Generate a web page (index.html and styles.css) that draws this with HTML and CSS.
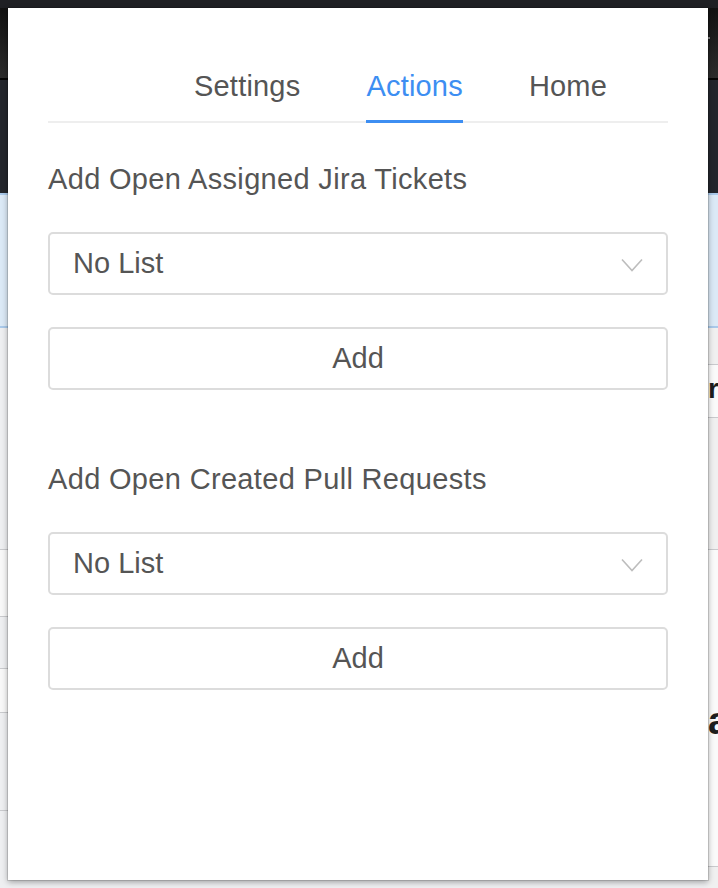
FILE: index.html
```html
<!DOCTYPE html>
<html>
<head>
<meta charset="utf-8">
<link rel="stylesheet" href="styles.css">
</head>
<body>
<div class="desktop">
  <div class="bg-topbar"></div>
  <div class="bg-toolbar"><span class="bg-dot"></span></div>
  <div class="bg-slate"></div>
  <div class="bg-blue"></div>
  <div class="bg-list">
    <div class="bg-col left">
      <div class="bg-row l1"></div>
      <div class="bg-row l2"></div>
      <div class="bg-row l3"></div>
      <div class="bg-row l4"></div>
      <div class="bg-row l5"></div>
      <div class="bg-row l6"></div>
    </div>
    <div class="bg-mid"></div>
    <div class="bg-col right">
      <div class="bg-row q1"></div>
      <div class="bg-row q2"><span class="bg-letter small">r</span></div>
      <div class="bg-row q3"></div>
      <div class="bg-row q4"><span class="bg-letter big">a</span></div>
      <div class="bg-row q5"></div>
    </div>
  </div>

  <div class="popup">
    <nav class="tabs">
      <span class="tab">Settings</span>
      <span class="tab active">Actions</span>
      <span class="tab">Home</span>
    </nav>

    <section class="section first">
      <h2 class="heading">Add Open Assigned Jira Tickets</h2>
      <div class="select">
        <span>No List</span>
        <svg class="chevron" width="22" height="14" viewBox="0 0 22 14"><path d="M1 1.5 L11 12.5 L21 1.5" fill="none" stroke="#bdbdbd" stroke-width="1.6"/></svg>
      </div>
      <button class="btn">Add</button>
    </section>

    <section class="section second">
      <h2 class="heading">Add Open Created Pull Requests</h2>
      <div class="select">
        <span>No List</span>
        <svg class="chevron" width="22" height="14" viewBox="0 0 22 14"><path d="M1 1.5 L11 12.5 L21 1.5" fill="none" stroke="#bdbdbd" stroke-width="1.6"/></svg>
      </div>
      <button class="btn">Add</button>
    </section>
  </div>
</div>
</body>
</html>
```
FILE: styles.css
```css
* { box-sizing: border-box; }
html, body { margin: 0; padding: 0; }
body {
  width: 718px;
  height: 888px;
  overflow: hidden;
  font-family: "Liberation Sans", Arial, sans-serif;
}
.desktop {
  position: relative;
  width: 718px;
  height: 888px;
  background: #eeeff1;
  display: flex;
  flex-direction: column;
}
.bg-topbar {
  height: 8px;
  background: #1f2024;
}
.bg-toolbar {
  height: 72px;
  background: linear-gradient(#121212, #2c2c2c);
  border-bottom: 2px solid #050505;
  display: flex;
  justify-content: flex-end;
  padding-top: 29px;
}
.bg-dot {
  width: 3px;
  height: 2px;
  background: #888;
  margin-right: 8px;
}
.bg-slate {
  height: 113px;
  background: #23262c;
}
.bg-blue {
  height: 135px;
  background: #dbe9f6;
  border-top: 2px solid #a9c9ea;
  border-bottom: 2px solid #a9c9ea;
}
.bg-list {
  flex: 1;
  display: flex;
}
.bg-col {
  display: flex;
  flex-direction: column;
  overflow: hidden;
}
.bg-col.left { width: 8px; }
.bg-col.right { width: 10px; }
.bg-mid { flex: 1; background: #eeeff1; }
.bg-row {
  border-bottom: 1px solid #c9cacd;
  display: flex;
  align-items: center;
  overflow: hidden;
  background: #eeeff1;
}
.l1 { height: 222px; }
.l2 { height: 67px; background: #f8f8f8; }
.l3 { height: 52px; }
.l4 { height: 44px; background: #f8f8f8; }
.l5 { height: 98px; }
.l6 { flex: 1; border-bottom: none; }

.q1 { height: 37px; background: #f0f0f0; }
.q2 { height: 53px; background: #fafafa; }
.q3 { height: 132px; background: #f0f0f0; }
.q4 { height: 317px; background: #fafafa; align-items: flex-start; padding-top: 152px; }
.q5 { flex: 1; border-bottom: none; background: #f0f0f0; }
.bg-letter {
  color: #1e1e1e;
  font-weight: bold;
  line-height: 1;
}
.bg-letter.small { font-size: 28px; margin-top: -4px; }
.bg-letter.big { font-size: 38px; }

.popup {
  position: absolute;
  left: 8px;
  top: 8px;
  width: 700px;
  height: 872px;
  background: #ffffff;
  box-shadow: 0 0 0 1px rgba(0,0,0,0.12), 0 2px 6px rgba(0,0,0,0.35);
  padding: 61px 40px 0 40px;
  color: #555555;
}
.tabs {
  display: flex;
  gap: 66px;
  padding-left: 146px;
  border-bottom: 2px solid #eeeeee;
  height: 54px;
}
.tab {
  font-size: 29px;
  line-height: 34px;
  height: 54px;
  padding-bottom: 17px;
  color: #555555;
  letter-spacing: 0.2px;
}
.tab.active {
  color: #3d8ef2;
  border-bottom: 3px solid #3d8ef2;
}
.section { display: flex; flex-direction: column; }
.section.first { margin-top: 39px; }
.section.second { margin-top: 72px; }
.heading {
  margin: 0;
  font-size: 29px;
  line-height: 34px;
  font-weight: normal;
  color: #555555;
  letter-spacing: 0.33px;
}
.select {
  margin-top: 36px;
  height: 63px;
  border: 2px solid #dcdcdc;
  border-radius: 5px;
  display: flex;
  align-items: center;
  justify-content: space-between;
  padding: 0 23px 0 23px;
  font-size: 29px;
  color: #555555;
}
.chevron { display: block; margin-top: 2px; }
.btn {
  margin-top: 32px;
  height: 63px;
  border: 2px solid #dcdcdc;
  border-radius: 5px;
  background: #ffffff;
  font-family: "Liberation Sans", Arial, sans-serif;
  font-size: 29px;
  color: #555555;
  padding: 0;
}
```
